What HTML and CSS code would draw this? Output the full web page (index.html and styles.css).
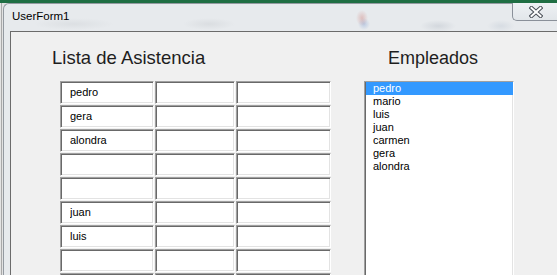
FILE: index.html
```html
<!DOCTYPE html>
<html lang="es">
<head>
    <meta charset="UTF-8" />
    <title>UserForm1</title>
    <link rel="stylesheet" href="styles.css">
</head>
<body>
    <div class="cinta"></div>

    <div class="ventana">
        <div class="barra">
            <span class="titulo">UserForm1</span>
            <button class="cerrar" type="button" aria-label="Cerrar">
                <svg width="14" height="12" viewBox="0 0 14 12">
                    <path d="M2.5 2 L11.5 10 M11.5 2 L2.5 10" stroke="#4a4f57" stroke-width="4" stroke-linecap="square" fill="none" />
                    <path d="M2.5 2 L11.5 10 M11.5 2 L2.5 10" stroke="#ffffff" stroke-width="2" stroke-linecap="square" fill="none" />
                </svg>
            </button>
        </div>

        <div class="marco">
            <div class="formulario">
                <section class="asistencia">
                    <h1>Lista de Asistencia</h1>
                    <div class="tabla">
                        <input type="text" value="pedro" /><input type="text" /><input type="text" />
                        <input type="text" value="gera" /><input type="text" /><input type="text" />
                        <input type="text" value="alondra" /><input type="text" /><input type="text" />
                        <input type="text" /><input type="text" /><input type="text" />
                        <input type="text" /><input type="text" /><input type="text" />
                        <input type="text" value="juan" /><input type="text" /><input type="text" />
                        <input type="text" value="luis" /><input type="text" /><input type="text" />
                        <input type="text" /><input type="text" /><input type="text" />
                        <input type="text" /><input type="text" /><input type="text" />
                    </div>
                </section>

                <section class="empleados">
                    <h1>Empleados</h1>
                    <ul class="lista">
                        <li class="seleccionado">pedro</li>
                        <li>mario</li>
                        <li>luis</li>
                        <li>juan</li>
                        <li>carmen</li>
                        <li>gera</li>
                        <li>alondra</li>
                    </ul>
                </section>
            </div>
        </div>
    </div>
</body>
</html>
```

FILE: styles.css
```css
body {
    margin: 0;
    width: 557px;
    height: 275px;
    overflow: hidden;
    font-family: "Liberation Sans", Arial, sans-serif;
    background-color: #dcdfe2;
    background-image: linear-gradient(to right, #e4e4e4 0, #e4e4e4 1px, #a9a9a9 1px, #a9a9a9 2px, #e2e2e2 2px);
}

/* franja verde de Excel detras de la ventana */
.cinta {
    height: 3px;
    background-color: #1f6e43;
}

.ventana {
    width: 556px;
    height: 272px;
    margin-left: 3px;
    border-left: 1px solid #949aa1;
    border-top: 1px solid #949aa1;
    border-top-left-radius: 6px;
    background-color: #e7eaed;
    box-sizing: border-box;
}

.barra {
    height: 27px;
    display: flex;
    align-items: flex-start;
    justify-content: space-between;
    background-image:
        radial-gradient(ellipse 40px 6px at 70px 20px, rgba(170, 175, 180, 0.18), transparent),
        radial-gradient(ellipse 26px 6px at 205px 20px, rgba(160, 165, 170, 0.18), transparent),
        radial-gradient(ellipse 6px 8px at 358px 14px, rgba(200, 90, 80, 0.3), transparent),
        radial-gradient(ellipse 6px 6px at 360px 20px, rgba(90, 130, 200, 0.3), transparent),
        radial-gradient(ellipse 18px 6px at 434px 22px, rgba(140, 150, 165, 0.22), transparent),
        radial-gradient(ellipse 14px 6px at 497px 22px, rgba(150, 165, 185, 0.2), transparent);
}

.titulo {
    margin: 5px 0 0 8px;
    font-size: 11.5px;
    line-height: 14px;
    color: #000;
}

.cerrar {
    width: 47px;
    height: 18px;
    margin-top: -1px;
    padding: 0;
    border: 1px solid #8a9099;
    border-top: none;
    border-right: none;
    border-bottom-left-radius: 5px;
    background: linear-gradient(#eef1f4, #e2e6ea);
    display: flex;
    align-items: center;
    justify-content: center;
}

.marco {
    padding-left: 6px;
}

.formulario {
    display: flex;
    height: 260px;
    background-color: #f0f0f0;
    border-top: 1px solid #6b6b6b;
    border-left: 1px solid #6b6b6b;
}

h1 {
    margin: 16px 0 0;
    font-size: 18px;
    line-height: 20px;
    font-weight: normal;
    color: #1e1e1e;
}

.asistencia {
    width: 353px;
    padding-left: 41px;
    box-sizing: border-box;
    flex: none;
}

.asistencia h1 {
    font-size: 18.5px;
}

.tabla {
    margin: 13px 0 0 8px;
    display: grid;
    grid-template-columns: 94px 80px 95px;
    grid-auto-rows: 23px;
    column-gap: 1px;
    row-gap: 1px;
}

/* cajas de texto con efecto hundido */
.tabla input,
.lista {
    border: 1px solid;
    border-color: #a0a0a0 #ffffff #ffffff #a0a0a0;
    box-shadow: inset 1px 1px 0 #696969, inset -1px -1px 0 #e3e3e3;
    background-color: #fff;
}

.tabla input {
    box-sizing: border-box;
    width: 100%;
    height: 23px;
    margin: 0;
    padding: 0 0 2px 9px;
    font-family: "Liberation Sans", Arial, sans-serif;
    font-size: 11px;
    color: #000;
    outline: none;
}

.empleados h1 {
    padding-left: 24px;
}

.lista {
    width: 150px;
    height: 220px;
    margin: 13px 0 0;
    padding: 0 0 0 1px;
    box-sizing: border-box;
    list-style: none;
    font-size: 11px;
}

.lista li {
    height: 13px;
    line-height: 13px;
    padding-left: 7px;
    color: #000;
}

.lista li.seleccionado {
    background-color: #3399ff;
    color: #fff;
}
```
